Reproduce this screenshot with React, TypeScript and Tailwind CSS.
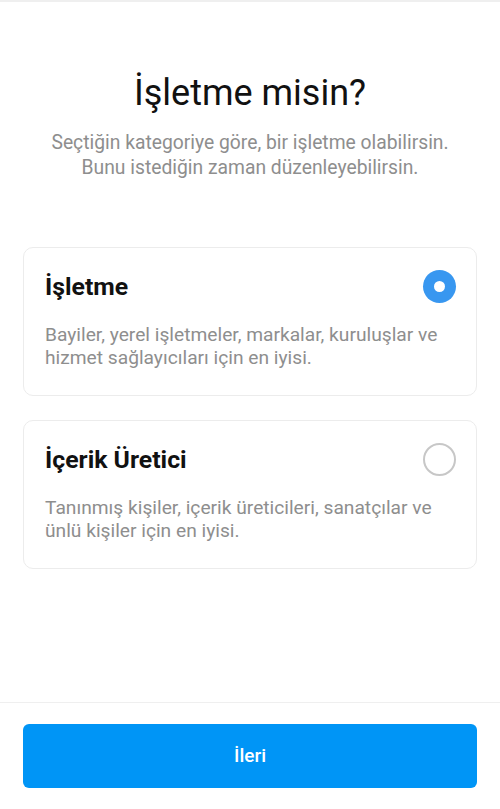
import React from "react";

function Radio({ checked }: { checked: boolean }) {
  return checked ? (
    <div className="w-[33px] h-[33px] rounded-full bg-[#3897f0] flex items-center justify-center shrink-0">
      <div className="w-[11px] h-[11px] rounded-full bg-white" />
    </div>
  ) : (
    <div className="w-[33px] h-[33px] rounded-full border-2 border-[#c7c7c7] shrink-0" />
  );
}

function Card({ title, desc, checked }: { title: string; desc: string; checked: boolean }) {
  return (
    <div className="mx-[23px] rounded-[10px] border border-[#ececec] bg-white pl-[21px] pr-[20px] pt-[22px] pb-[26px]">
      <div className="flex items-center justify-between">
        <div className="text-[24.8px] leading-[32px] font-bold text-[#111]">{title}</div>
        <Radio checked={checked} />
      </div>
      <div className="mt-[20px] text-[19.2px] leading-[23px] text-[#8e8e8e] pr-[4px]">{desc}</div>
    </div>
  );
}

export default function App() {
  return (
    <div
      className="w-full h-[809px] flex flex-col bg-white border-t-2 border-[#efefef]"
      style={{ fontFamily: "Roboto, 'Noto Sans', sans-serif" }}
    >
      <div className="pt-[71px] text-center">
        <h1 className="text-[36px] leading-[40px] text-[#111] font-normal">İşletme misin?</h1>
        <p className="mt-[17px] text-[19.3px] leading-[25px] text-[#8e8e8e]">
          Seçtiğin kategoriye göre, bir işletme olabilirsin.
          <br />
          Bunu istediğin zaman düzenleyebilirsin.
        </p>
      </div>
      <div className="mt-[67px] flex flex-col gap-[24px]">
        <Card
          title="İşletme"
          desc="Bayiler, yerel işletmeler, markalar, kuruluşlar ve hizmet sağlayıcıları için en iyisi."
          checked={true}
        />
        <Card
          title="İçerik Üretici"
          desc="Tanınmış kişiler, içerik üreticileri, sanatçılar ve ünlü kişiler için en iyisi."
          checked={false}
        />
      </div>
      <div className="flex-1" />
      <div className="border-t border-[#efefef] px-[23px] pt-[21px] pb-[21px]">
        <button className="w-full h-[64px] rounded-[6px] bg-[#0095f6] text-white text-[19px] font-medium">
          İleri
        </button>
      </div>
    </div>
  );
}
